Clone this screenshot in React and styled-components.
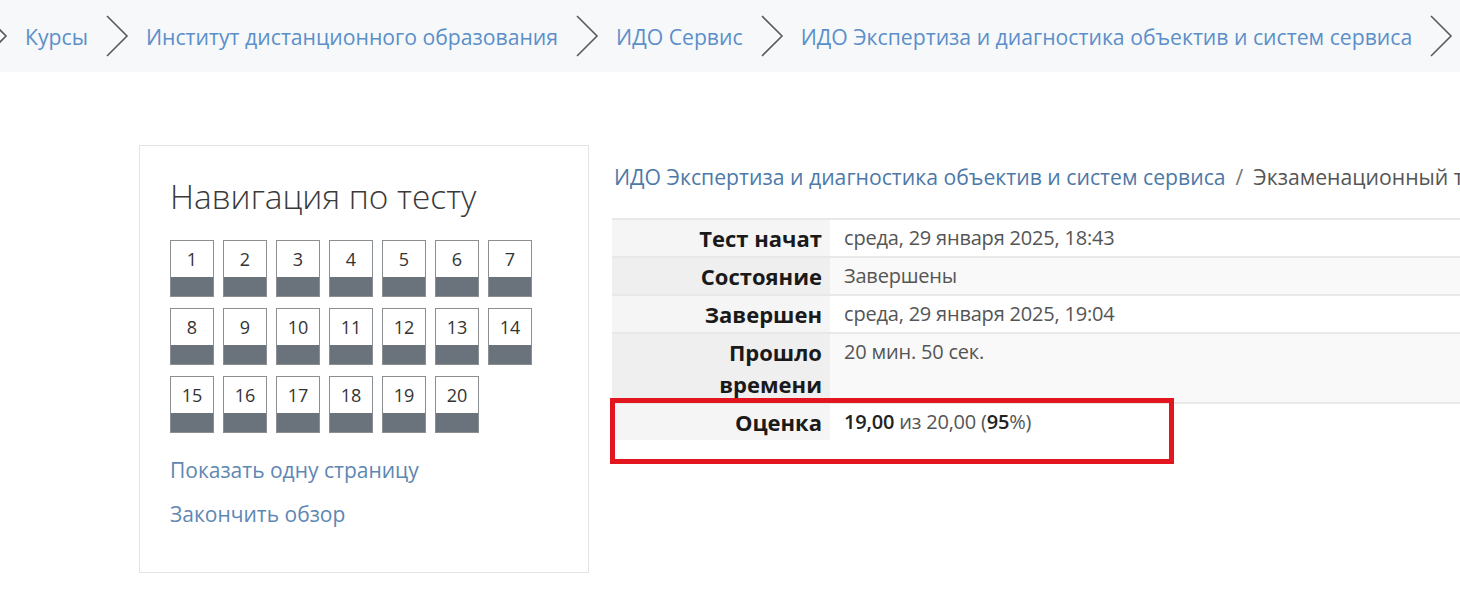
import styled, { createGlobalStyle } from 'styled-components';

const GlobalStyle = createGlobalStyle`
  html, body {
    margin: 0;
    padding: 0;
    background: #ffffff;
    font-family: "Open Sans", "Noto Sans", sans-serif;
    overflow: hidden;
  }
`;

const crumbs = [
  'Курсы',
  'Институт дистанционного образования',
  'ИДО Сервис',
  'ИДО Экспертиза и диагностика объектив и систем сервиса',
];

const rows = [
  { label: 'Тест начат', value: 'среда, 29 января 2025, 18:43' },
  { label: 'Состояние', value: 'Завершены' },
  { label: 'Завершен', value: 'среда, 29 января 2025, 19:04' },
  { label: ['Прошло', 'времени'], value: '20 мин. 50 сек.' },
];

function Chevron() {
  return (
    <ChevronSvg width="24" height="42" viewBox="0 0 24 42">
      <polyline points="2,1 22,21 2,41" fill="none" stroke="#5a5a5a" strokeWidth="1.6" />
    </ChevronSvg>
  );
}

function App() {
  const questions = Array.from({ length: 20 }, (_, i) => i + 1);

  return (
    <>
      <GlobalStyle />
      <Header>
        <Crumbs>
          <Chevron />
          {crumbs.map((c) => (
            <Crumb key={c}>
              <CrumbLink>{c}</CrumbLink>
              <Chevron />
            </Crumb>
          ))}
        </Crumbs>
      </Header>

      <Main>
        <NavCard>
          <NavTitle>Навигация по тесту</NavTitle>
          <QuestionGrid>
            {questions.map((n) => (
              <QButton key={n}>
                <QNum>{n}</QNum>
                <QState />
              </QButton>
            ))}
          </QuestionGrid>
          <NavLinks>
            <NavLink>Показать одну страницу</NavLink>
            <NavLink>Закончить обзор</NavLink>
          </NavLinks>
        </NavCard>

        <Content>
          <PathLine>
            <PathLink>ИДО Экспертиза и диагностика объектив и систем сервиса</PathLink>
            <PathSep>/</PathSep>
            <PathCurrent>Экзаменационный тест</PathCurrent>
          </PathLine>

          <TableWrap>
            <Summary>
              <tbody>
                {rows.map((r, i) => (
                  <Row key={i} $odd={i % 2 === 1}>
                    <Th $odd={i % 2 === 1}>
                      {Array.isArray(r.label) ? (
                        <>
                          {r.label[0]}
                          <br />
                          {r.label[1]}
                        </>
                      ) : (
                        r.label
                      )}
                    </Th>
                    <Td>{r.value}</Td>
                  </Row>
                ))}
                <Row>
                  <Th>Оценка</Th>
                  <Td>
                    <Strong>19,00</Strong> из 20,00 (<Strong>95</Strong>%)
                  </Td>
                </Row>
              </tbody>
            </Summary>
            <Highlight />
          </TableWrap>
        </Content>
      </Main>
    </>
  );
}

const Header = styled.header`
  height: 72px;
  background: #f7f8fa;
  display: flex;
  align-items: center;
  overflow: hidden;
`;

const Crumbs = styled.nav`
  display: flex;
  align-items: center;
  gap: 17px;
  margin-left: -16px;
  white-space: nowrap;
`;

const Crumb = styled.div`
  display: flex;
  align-items: center;
  gap: 17px;
`;

const CrumbLink = styled.span`
  font-size: 21.2px;
  color: #5b8fc9;
`;

const ChevronSvg = styled.svg`
  flex: none;
  display: block;
`;

const Main = styled.main`
  display: flex;
  align-items: flex-start;
  gap: 23px;
  padding: 73px 0 0 139px;
`;

const NavCard = styled.section`
  flex: none;
  box-sizing: border-box;
  width: 450px;
  height: 428px;
  border: 1px solid #e3e3e3;
  padding: 28px 30px 0 30px;
`;

const NavTitle = styled.h2`
  margin: 0 0 22px 0;
  font-size: 33.4px;
  font-weight: 300;
  line-height: 44px;
  color: #3a3a3a;
`;

const QuestionGrid = styled.div`
  display: grid;
  grid-template-columns: repeat(7, 44px);
  column-gap: 9px;
  row-gap: 11px;
`;

const QButton = styled.div`
  box-sizing: border-box;
  height: 57px;
  border: 1px solid #8c8f92;
  display: flex;
  flex-direction: column;
`;

const QNum = styled.div`
  height: 36px;
  background: #ffffff;
  display: flex;
  align-items: center;
  justify-content: center;
  font-size: 18px;
  color: #333333;
`;

const QState = styled.div`
  flex: 1;
  background: #6a737b;
`;

const NavLinks = styled.div`
  display: flex;
  flex-direction: column;
  gap: 11px;
  margin-top: 21px;
`;

const NavLink = styled.span`
  font-size: 21px;
  line-height: 33px;
  color: #5e87b3;
`;

const Content = styled.div`
  flex: 1;
  min-width: 0;
  padding-top: 17px;
`;

const PathLine = styled.div`
  display: flex;
  align-items: center;
  gap: 10px;
  white-space: nowrap;
  font-size: 21.2px;
  line-height: 30px;
  margin-left: 2px;
`;

const PathLink = styled.span`
  color: #4d79a8;
`;

const PathSep = styled.span`
  color: #777777;
`;

const PathCurrent = styled.span`
  color: #555555;
`;

const TableWrap = styled.div`
  position: relative;
  margin-top: 26px;
  width: 900px;
`;

const Summary = styled.table`
  width: 100%;
  border-collapse: collapse;
  font-size: 20px;
  letter-spacing: -0.2px;
`;

const Row = styled.tr`
  background: ${(p) => (p.$odd ? '#f9f9f9' : '#ffffff')};
  border-top: 2px solid #e8e8e8;
`;

const Th = styled.th`
  width: 218px;
  box-sizing: border-box;
  text-align: right;
  vertical-align: top;
  padding: 2px 8px 2px 8px;
  line-height: 32px;
  font-size: 22px;
  font-weight: 700;
  letter-spacing: 0;
  color: #1a1a1a;
  background: ${(p) => (p.$odd ? '#efefef' : '#f5f5f5')};
`;

const Td = styled.td`
  vertical-align: top;
  padding: 2px 14px;
  line-height: 32px;
  color: #555555;
`;

const Strong = styled.span`
  font-weight: 600;
  color: #222222;
`;

const Highlight = styled.div`
  position: absolute;
  left: -2px;
  top: 180px;
  width: 564px;
  height: 66px;
  box-sizing: border-box;
  border: 5px solid #e3161f;
  pointer-events: none;
`;

export default App;
